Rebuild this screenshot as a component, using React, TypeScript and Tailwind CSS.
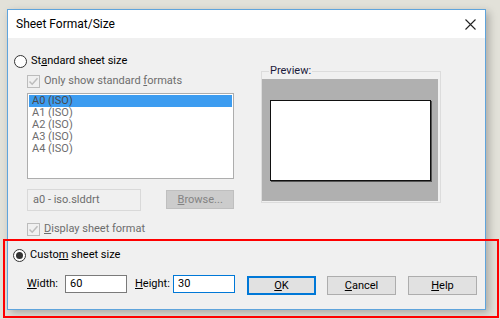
import React from "react";

const font = { fontFamily: 'Roboto, "Noto Sans", sans-serif' };

function Radio({ checked }: { checked?: boolean }) {
  return (
    <span className="w-[13px] h-[13px] rounded-full border border-[#333333] bg-white flex items-center justify-center shrink-0">
      {checked && <span className="w-[7px] h-[7px] rounded-full bg-[#333333]" />}
    </span>
  );
}

function DisabledCheck() {
  return (
    <span className="w-[13px] h-[13px] border border-[#bcbcbc] bg-[#f0f0f0] flex items-center justify-center shrink-0">
      <svg width="11" height="11" viewBox="0 0 11 11">
        <path d="M1.5 5.5 L4.2 8.2 L9.5 2.2" fill="none" stroke="#bcbcbc" strokeWidth="1.5" />
      </svg>
    </span>
  );
}

export default function App() {
  const items = ["A0 (ISO)", "A1 (ISO)", "A2 (ISO)", "A3 (ISO)", "A4 (ISO)"];
  return (
    <div
      className="relative w-[500px] h-[319px] overflow-hidden bg-[#e2e1d9] text-[11px] leading-[16px] text-black"
      style={font}
    >
      <div className="ml-[7px] mt-[9px] w-[479px] h-[301px] border border-[#5fa4dc] bg-[#f0f0f0] flex flex-col shadow-[3px_3px_8px_rgba(0,0,0,0.25)]">
        {/* title bar */}
        <div className="h-[28px] bg-white flex items-center justify-between pl-[8px] pr-[9px] shrink-0">
          <span className="text-[12px]">Sheet Format/Size</span>
          <svg width="11" height="11" viewBox="0 0 11 11">
            <path d="M0.5 0.5 L10.5 10.5 M10.5 0.5 L0.5 10.5" stroke="#222" strokeWidth="1.1" />
          </svg>
        </div>
        {/* body */}
        <div className="flex flex-col">
          <div className="flex flex-row">
            <div className="flex flex-col pl-[6px] pt-[15px] w-[226px]">
              <div className="h-[16px] flex items-center gap-[4px]">
                <Radio />
                <span>
                  St<span className="underline">a</span>ndard sheet size
                </span>
              </div>
              <div className="mt-[4px] h-[16px] pl-[13px] flex items-center gap-[4px] text-[#6d6d6d]">
                <DisabledCheck />
                <span>
                  Only show standard <span className="underline">f</span>ormats
                </span>
              </div>
              <div className="mt-[4px] ml-[13px] w-[207px] h-[86px] border border-[#adadad] bg-white p-[1px] flex flex-col">
                {items.map((it, i) => (
                  <div
                    key={it}
                    className={
                      "h-[12px] leading-[12px] pl-[3px] " +
                      (i === 0 ? "bg-[#3c9cf0] text-[#4a4a4a]" : "text-[#6d6d6d]")
                    }
                  >
                    {it}
                  </div>
                ))}
              </div>
              <div className="mt-[10px] ml-[13px] flex flex-row items-start">
                <div className="w-[115px] h-[22px] border border-[#d9d9d9] bg-[#f0f0f0] flex items-center pl-[5px] text-[#6d6d6d]">
                  a0 - iso.slddrt
                </div>
                <div className="ml-[25px] mt-[1px] w-[68px] h-[19px] border border-[#bfbfbf] bg-[#cccccc] flex items-center justify-center text-[#838383]">
                  <span>
                    <span className="underline">B</span>rowse...
                  </span>
                </div>
              </div>
              <div className="mt-[10px] h-[16px] pl-[13px] flex items-center gap-[4px] text-[#6d6d6d]">
                <DisabledCheck />
                <span>
                  <span className="underline">D</span>isplay sheet format
                </span>
              </div>
            </div>
            <fieldset className="ml-[27px] mt-[25px] w-[180px] h-[140px] border border-[#dcdcdc] pr-[2px] pb-[1px] flex flex-col">
              <legend className="ml-[7px] px-[1px] text-[#1a1a3a]">Preview:</legend>
              <div className="w-[176px] h-[122px] bg-[#b0b0b0] pl-[8px] pt-[21px]">
                <div className="w-[161px] h-[81px] bg-white border border-[#111] shadow-[1px_1px_0_#555]" />
              </div>
            </fieldset>
          </div>
          {/* custom */}
          <div className="mt-[10px] pl-[5px] h-[16px] flex items-center gap-[4px]">
            <Radio checked />
            <span>
              Custo<span className="underline">m</span> sheet size
            </span>
          </div>
          <div className="mt-[12px] pl-[19px] flex flex-row items-start">
            <span className="w-[38px] h-[18px] flex items-center">
              <span>
                <span className="underline">W</span>idth:
              </span>
            </span>
            <div className="w-[62px] h-[18px] border border-[#7a7a7a] bg-white flex items-center pl-[4px]">60</div>
            <span className="ml-[8px] w-[38px] h-[18px] flex items-center">
              <span>
                <span className="underline">H</span>eight:
              </span>
            </span>
            <div className="w-[62px] h-[18px] border border-[#0078d7] bg-white flex items-center pl-[4px]">30</div>
            <div className="ml-[12px] mt-[1px] w-[69px] h-[19px] border-2 border-[#0078d7] bg-[#e1e1e1] flex items-center justify-center">
              <span>
                <span className="underline">O</span>K
              </span>
            </div>
            <div className="ml-[11px] mt-[1px] w-[69px] h-[19px] border border-[#adadad] bg-[#e1e1e1] flex items-center justify-center">
              <span>
                <span className="underline">C</span>ancel
              </span>
            </div>
            <div className="ml-[12px] mt-[1px] w-[69px] h-[19px] border border-[#adadad] bg-[#e1e1e1] flex items-center justify-center">
              <span>
                <span className="underline">H</span>elp
              </span>
            </div>
          </div>
        </div>
      </div>
      {/* red highlight overlay */}
      <div className="absolute left-[3px] top-[239px] w-[496px] h-[79px] border-2 border-[#ff0000] pointer-events-none" />
    </div>
  );
}
